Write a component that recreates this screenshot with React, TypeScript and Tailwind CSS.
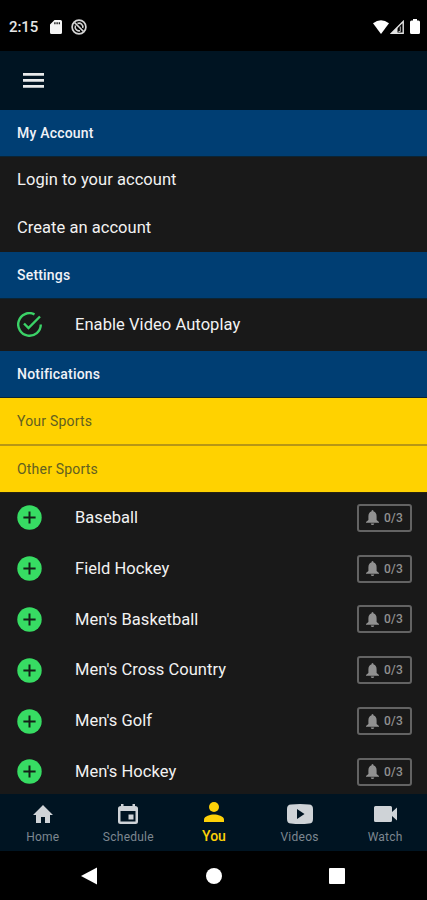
import React from "react";

const sports = ["Baseball", "Field Hockey", "Men's Basketball", "Men's Cross Country", "Men's Golf", "Men's Hockey"];

function SectionHeader({ children }: { children: React.ReactNode }) {
  return (
    <h2 className="flex h-[47px] shrink-0 items-center border-b border-[#0b2434] bg-[#003e73] px-[17px] pt-px text-[14px] font-medium tracking-[0.2px] text-[#f0f2f8]">
      {children}
    </h2>
  );
}

function StatusBar() {
  return (
    <div className="flex h-[51px] shrink-0 items-center bg-black pr-[7px] pl-[9px] pt-[2px] text-white">
      <span className="w-[40px] pt-px text-[15px] font-medium tracking-[-0.1px] text-[#e6e6e6]">2:15</span>
      <svg className="ml-[1px] h-[14px] w-[12px]" viewBox="0 0 12 14" fill="#f4f4f4">
        <path fillRule="evenodd" d="M4.5 0H10.5Q12 0 12 1.5V12.5Q12 14 10.500 14H1.500Q0 14 0 12.500V4.500ZM4.300 2.200V4.300H5.500V2.200ZM6.500 2.200V4.300H7.700V2.200ZM8.700 2.200V4.300H9.900V2.200Z" />
      </svg>
      <svg className="ml-[9px] h-[16px] w-[16px]" viewBox="0 0 16 16" fill="none" stroke="#d4d4d4">
        <circle cx="8" cy="8" r="6.9" strokeWidth="1.7" />
        <path d="M3.500 3.500 12.500 12.500" strokeWidth="1.700" />
        <path d="M6.500 4.500A3.800 3.800 0 0 1 11.700 9M4.500 6.500A3.800 3.800 0 0 0 9 11.700" strokeWidth="1.500" />
      </svg>
      <svg className="ml-auto h-[14px] w-[16px]" viewBox="0 0 17 14" fill="white" preserveAspectRatio="none">
        <path d="M0 3.300Q8.500-3 17 3.300L8.500 14Z" />
      </svg>
      <svg className="ml-[1px] h-[14px] w-[14px]" viewBox="0 0 14 14" fill="none" stroke="#e5e5e5">
        <path d="M1.500 13.200H13.200V1.500Z" strokeWidth="1.400" />
        <path d="M1 13.500 7.500 7V13.500Z" fill="#e5e5e5" stroke="none" />
        <path d="M10.300 6.500V11.500H8.500" strokeWidth=".8" />
      </svg>
      <svg className="ml-[6px] h-[15px] w-[10px]" viewBox="0 0 10 15" fill="white">
        <path d="M3 0H7V1.500H8.500Q10 1.500 10 3V13.500Q10 15 8.500 15H1.500Q0 15 0 13.500V3Q0 1.500 1.500 1.500H3Z" />
      </svg>
    </div>
  );
}

function SportRow({ name }: { name: string }) {
  return (
    <li className="flex h-[50.8px] shrink-0 items-center pr-[15px] pl-[17px]">
      <svg className="h-[25px] w-[25px]" viewBox="0 0 25 25">
        <circle cx="12.500" cy="12.500" r="12.200" fill="#37dc63" />
        <path d="M12.500 6.400V18.600M6.400 12.500H18.600" stroke="#142018" strokeWidth="2" />
      </svg>
      <span className="ml-[33px] pt-px text-[16.5px] tracking-[0.04px] text-[#f2f2f2]">{name}</span>
      <div className="ml-auto flex h-[28px] w-[55px] items-center rounded-[3px] border-2 border-[#636363] pl-[7px] text-[#919191]">
        <svg className="h-[15px] w-[13px]" viewBox="0 0 13 15" fill="currentColor">
          <path d="M6.500 0Q7.600 0 7.600 1.500Q10.600 2.300 10.600 6.500V10L13 12V12.800H0V12L2.400 10V6.500Q2.400 2.300 5.400 1.500Q5.400 0 6.500 0ZM4.700 13.500H8.300Q8 15 6.500 15Q5 15 4.700 13.500Z" />
        </svg>
        <span className="ml-[5px] text-[12px] font-medium tracking-[0.3px]">0/3</span>
      </div>
    </li>
  );
}

function Tab({ label, icon, active }: { label: string; icon: React.ReactNode; active?: boolean }) {
  return (
    <div className={active ? "flex flex-1 flex-col items-center pt-[6px] text-[#fdd108]" : "flex flex-1 flex-col items-center pt-[8px] text-[#cfd3d7]"}>
      <span className="flex h-[24px] items-center">{icon}</span>
      <span className={active ? "mt-[3px] text-[14px] leading-[18px] font-medium" : "mt-[2px] text-[12px] leading-[18px] tracking-[0.25px] text-[#7d8790]"}>{label}</span>
    </div>
  );
}

export default function App() {
  return (
    <div className="flex h-[900px] w-[427px] flex-col overflow-hidden bg-[#191919] font-[Roboto,sans-serif]">
      <StatusBar />
      <header className="flex h-[58.500px] shrink-0 items-center bg-[#001422] pl-[23px]">
        <svg className="h-[15px] w-[21px]" viewBox="0 0 21 15" fill="#e8eaeb">
          <path d="M0 0H21V2.700H0ZM0 6H21V8.700H0ZM0 12H21V14.700H0Z" />
        </svg>
      </header>
      <main className="flex min-h-0 flex-1 flex-col overflow-hidden">
        <SectionHeader>My Account</SectionHeader>
        <div className="flex h-[47.500px] shrink-0 items-center px-[17px] text-[16.5px] tracking-[0.04px] text-[#f2f2f2]">Login to your account</div>
        <div className="flex h-[48px] shrink-0 items-center px-[17px] text-[16.5px] tracking-[0.04px] text-[#f2f2f2]">Create an account</div>
        <SectionHeader>Settings</SectionHeader>
        <div className="flex h-[51.500px] shrink-0 items-center px-[17px]">
          <svg className="h-[26px] w-[26px]" viewBox="0 0 26 26" fill="none" stroke="#3bd267" strokeWidth="2.400">
            <path d="M17.500 2.300A11.300 11.300 0 1 0 23.800 12.500" />
            <path d="M7 11.500 11.500 16 23 4.500" />
          </svg>
          <span className="ml-[32px] pt-px text-[16.5px] tracking-[0.06px] text-[#f2f2f2]">Enable Video Autoplay</span>
        </div>
        <SectionHeader>Notifications</SectionHeader>
        <h3 className="flex h-[48px] shrink-0 items-center border-b-2 border-[#b79715] bg-[#ffd200] px-[17px] pt-[2px] text-[14px] tracking-[0.2px] text-[#626020]">Your Sports</h3>
        <h3 className="flex h-[47px] shrink-0 items-center border-b border-[#282411] bg-[#ffd200] px-[17px] pt-[2px] text-[14px] tracking-[0.2px] text-[#626020]">Other Sports</h3>
        <ul>
          {sports.map((name) => <SportRow key={name} name={name} />)}
        </ul>
      </main>
      <nav className="-mr-px flex h-[57.500px] shrink-0 bg-[#001422]">
        <Tab label="Home" icon={<svg className="h-[24px] w-[24px]" viewBox="0 0 24 24" fill="currentColor"><path d="M10 21v-6h4v6h5v-8h3L12 3 2 13h3v8z" /></svg>} />
        <Tab label="Schedule" icon={<svg className="h-[20px] w-[20px]" viewBox="0 0 20 20" fill="currentColor"><path fillRule="evenodd" d="M3 0H5.500V2H14.500V0H17V2Q20 2 20 4.500V17.500Q20 20 17.500 20H2.500Q0 20 0 17.500V4.500Q0 2 3 2ZM2.500 7V17.500H17.500V7Z" /><path d="M10.500 10.500H15.500V15.500H10.500Z" /></svg>} />
        <Tab active label="You" icon={<svg className="h-[20px] w-[20px]" viewBox="0 0 20 20" fill="currentColor"><circle cx="10" cy="5" r="5" /><path d="M0 20V17.500C0 14 6.500 12.500 10 12.500S20 14 20 17.500V20Z" /></svg>} />
        <Tab label="Videos" icon={<svg className="h-[20px] w-[26px]" viewBox="0 0 26 20" fill="currentColor"><path fillRule="evenodd" d="M4 .5Q13-.5 22 .5Q26 .5 26 5V15Q26 19.500 22 19.500Q13 20.500 4 19.500Q0 19.500 0 15V5Q0 .5 4 .5ZM10 5V15L17.500 10Z" /></svg>} />
        <Tab label="Watch" icon={<svg className="h-[16px] w-[23px]" viewBox="0 0 23 16" fill="currentColor"><path d="M1.500 0H16.500Q18 0 18 1.500V6L23 1.500V14.500L18 10V14.500Q18 16 16.500 16H1.500Q0 16 0 14.500V1.500Q0 0 1.500 0Z" /></svg>} />
      </nav>
      <div className="flex h-[49px] shrink-0 items-center bg-black pl-[81px]">
        <svg className="h-[18px] w-[16px]" viewBox="0 0 16 18" fill="white"><path d="M16 .5V17.500L0 9Z" /></svg>
        <span className="ml-[109px] h-[16px] w-[16px] rounded-full bg-white" />
        <span className="ml-[107px] h-[16px] w-[16px] rounded-[1px] bg-white" />
      </div>
    </div>
  );
}
